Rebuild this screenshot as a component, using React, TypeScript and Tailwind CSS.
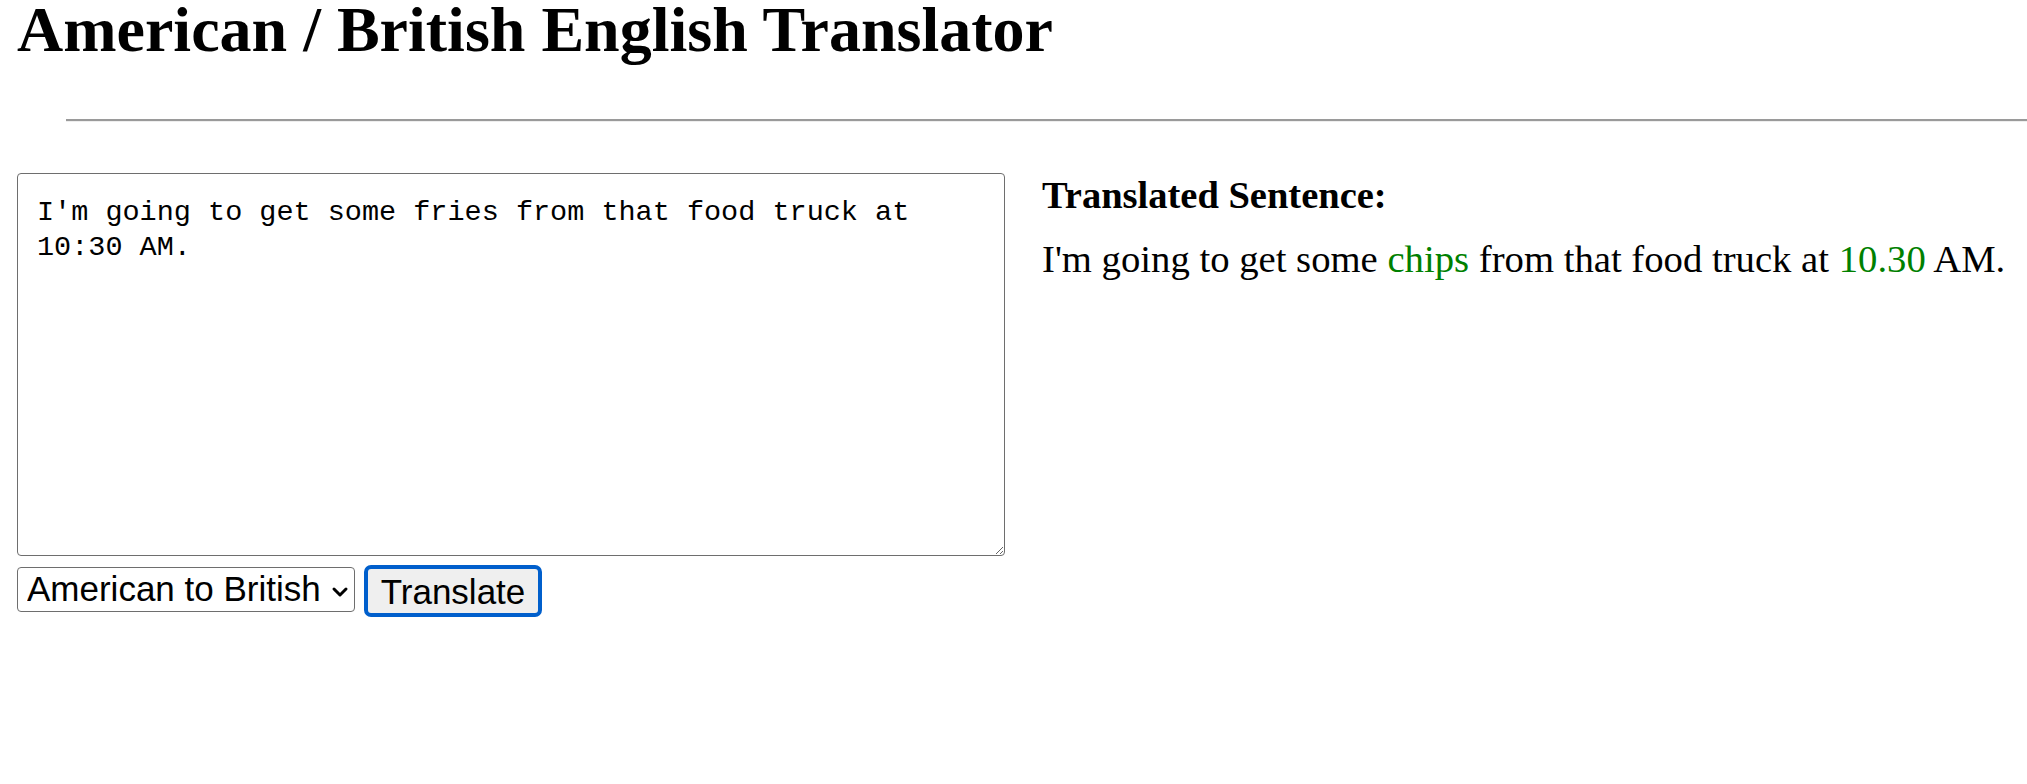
import { useState } from 'react'

export default function App() {
  const [text, setText] = useState("I'm going to get some fries from that food truck at 10:30 AM.")
  const [locale, setLocale] = useState('american-to-british')

  return (
    <div className="min-h-screen bg-white text-black font-['Liberation_Serif','Times_New_Roman',serif]">
      {/* Title */}
      <h1 className="pl-[17px] text-[64px] leading-[60px] font-bold whitespace-nowrap">
        American / British English Translator
      </h1>

      <hr className="ml-[66px] mt-[59px] border-0 border-t-2 border-t-[#9a9a9a] border-b border-b-[#eeeeee]" />

      <div className="flex gap-[37px] pl-[17px] mt-[51px]">
        {/* Input side */}
        <div className="flex flex-col w-[988px] shrink-0">
          <textarea
            value={text}
            onChange={e => setText(e.target.value)}
            className="w-[988px] h-[383px] border border-[#6e6e6e] rounded-[4px] pt-[21px] pl-[19px] pr-[10px] text-[28.5px] leading-[35px] font-['Liberation_Mono','Courier_New',monospace] outline-none"
          />
          <div className="flex items-start gap-[9px] mt-[9px]">
            <div className="mt-[2px] h-[45px] w-[338px] flex items-center border border-[#6e6e6e] rounded-[4px] bg-white">
              <select
                value={locale}
                onChange={e => setLocale(e.target.value)}
                className="appearance-none bg-transparent outline-none pl-[9px] flex-1 text-[35px] leading-normal font-['Liberation_Sans',Arial,sans-serif]"
              >
                <option value="american-to-british">American to British</option>
                <option value="british-to-american">British to American</option>
              </select>
              <svg width="18" height="14" viewBox="0 0 18 14" className="mr-[5px] mt-[4px]">
                <path d="M3 4 L9 10 L15 4" fill="none" stroke="#000" strokeWidth="3" strokeLinecap="round" strokeLinejoin="round" />
              </svg>
            </div>
            <button className="h-[52px] w-[178px] border-[4px] border-[#005fcc] rounded-[7px] bg-[#efefef] text-[35px] leading-none font-['Liberation_Sans',Arial,sans-serif]">
              Translate
            </button>
          </div>
        </div>

        {/* Output side */}
        <div className="flex flex-col">
          <h3 className="text-[38.5px] leading-[44px] font-bold whitespace-nowrap">Translated Sentence:</h3>
          <p className="mt-[20px] text-[38.7px] leading-[44px] whitespace-nowrap">
            I'm going to get some <span className="text-[#008000]">chips</span> from that food truck at{' '}
            <span className="text-[#008000]">10.30</span> AM.
          </p>
        </div>
      </div>
    </div>
  )
}
